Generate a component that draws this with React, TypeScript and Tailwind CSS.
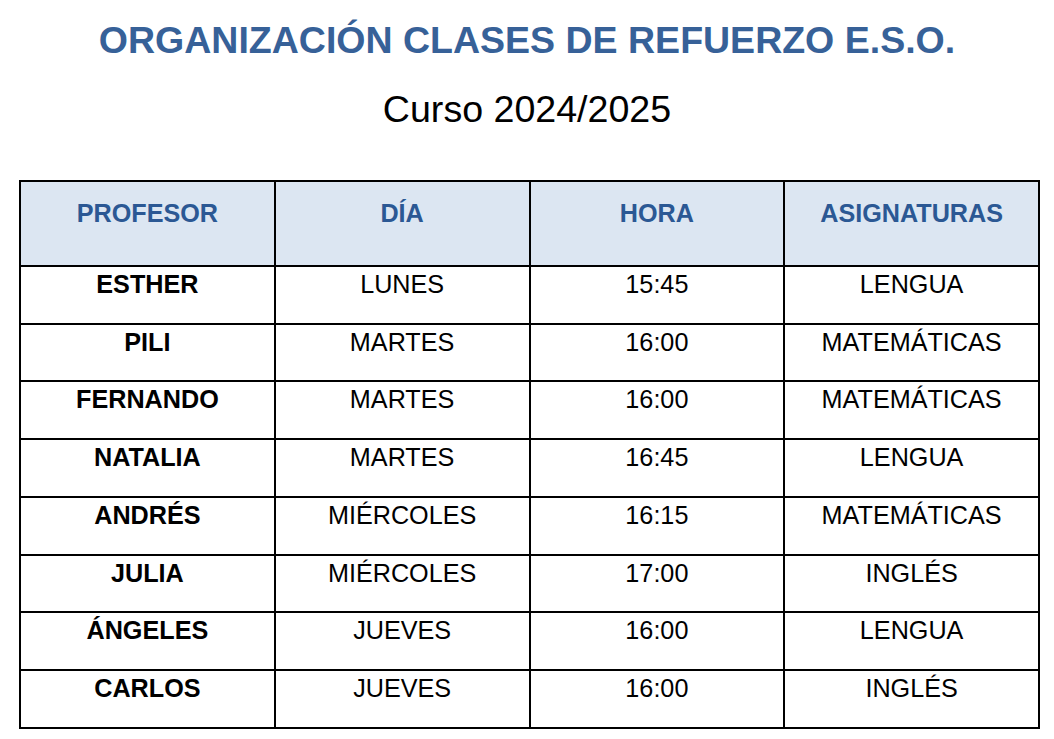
const rows = [
  ['ESTHER', 'LUNES', '15:45', 'LENGUA'],
  ['PILI', 'MARTES', '16:00', 'MATEMÁTICAS'],
  ['FERNANDO', 'MARTES', '16:00', 'MATEMÁTICAS'],
  ['NATALIA', 'MARTES', '16:45', 'LENGUA'],
  ['ANDRÉS', 'MIÉRCOLES', '16:15', 'MATEMÁTICAS'],
  ['JULIA', 'MIÉRCOLES', '17:00', 'INGLÉS'],
  ['ÁNGELES', 'JUEVES', '16:00', 'LENGUA'],
  ['CARLOS', 'JUEVES', '16:00', 'INGLÉS'],
];

const headers = ['PROFESOR', 'DÍA', 'HORA', 'ASIGNATURAS'];

export default function App() {
  return (
    <div className="w-[1054px] h-[739px] bg-white font-['Liberation_Sans',Arial,sans-serif] text-black overflow-hidden">
      <h1 className="pt-[22px] text-center text-[37.5px] leading-none font-bold text-[#376198]">
        ORGANIZACIÓN CLASES DE REFUERZO E.S.O.
      </h1>
      <p className="mt-[31px] text-center text-[37.6px] leading-none">Curso 2024/2025</p>

      <table className="mt-[52px] ml-[19px] w-[1021px] table-fixed border-collapse border-2 border-black">
        <thead>
          <tr className="bg-[#dce6f2]">
            {headers.map((h) => (
              <th
                key={h}
                className="h-[85px] border-2 border-black align-top pt-[19px] text-[25.2px] leading-none font-bold text-[#2b5894]"
              >
                {h}
              </th>
            ))}
          </tr>
        </thead>
        <tbody>
          {rows.map((r, i) => (
            <tr key={i}>
              {r.map((c, j) => (
                <td
                  key={j}
                  className={`h-[57.7px] border-2 border-black align-top pt-[5px] text-center text-[25.2px] leading-none ${
                    j === 0 ? 'font-bold' : ''
                  }`}
                >
                  {c}
                </td>
              ))}
            </tr>
          ))}
        </tbody>
      </table>
    </div>
  );
}
